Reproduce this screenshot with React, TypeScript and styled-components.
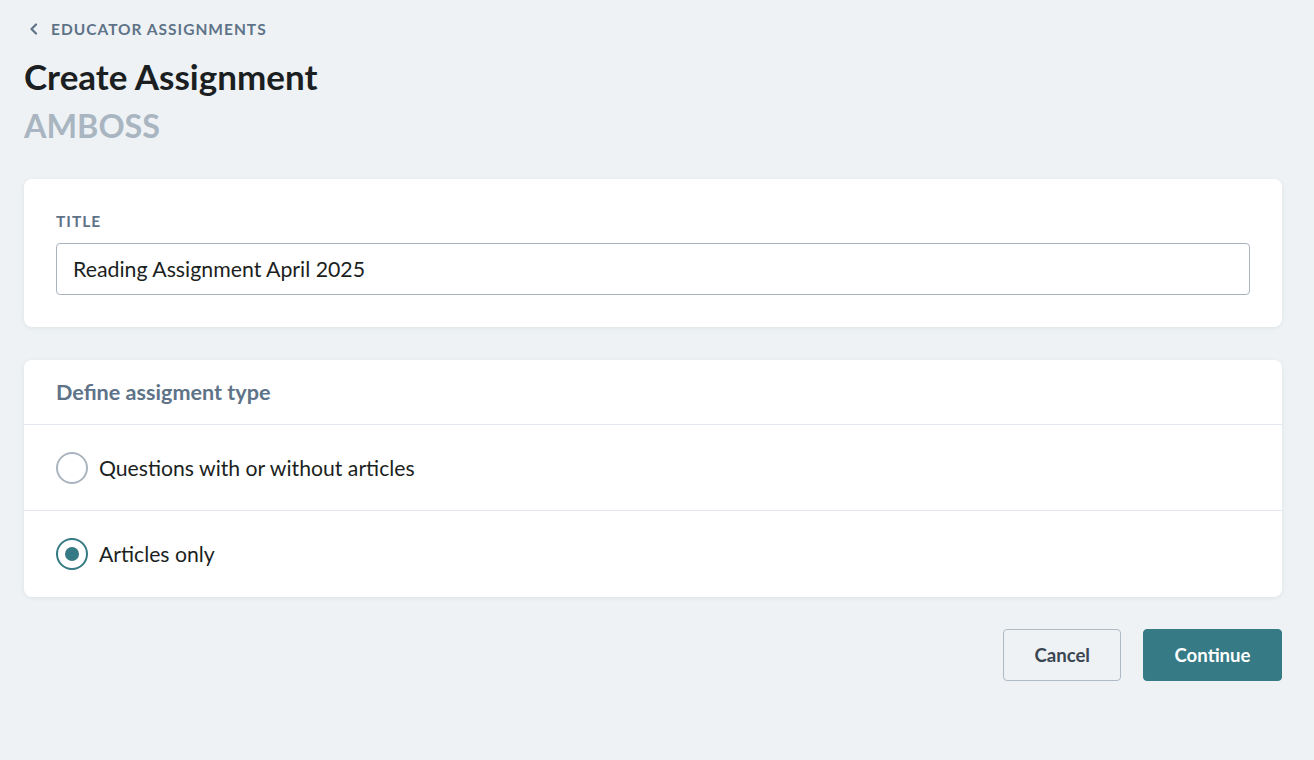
import React, { useState } from "react";
import styled, { createGlobalStyle } from "styled-components";

const GlobalStyle = createGlobalStyle`
  html, body { margin: 0; padding: 0; background: #eef2f5; }
  body { font-family: Lato, "Open Sans", sans-serif; color: #1b1f22; }
  * { box-sizing: border-box; }
`;

const Page = styled.div`
  padding: 19px 32px 40px 24px;
  display: flex;
  flex-direction: column;
`;

const BackLink = styled.a`
  display: flex;
  align-items: center;
  gap: 12px;
  padding-left: 5px;
  height: 20px;
  font-size: 15.5px;
  line-height: 20px;
  font-weight: 700;
  letter-spacing: 1px;
  text-transform: uppercase;
  color: #5e7388;
  text-decoration: none;
  cursor: pointer;
`;

const Title = styled.h1`
  margin: 16px 0 0 0;
  font-size: 35px;
  line-height: 42px;
  font-weight: 700;
  color: #1b1f22;
`;

const Subtitle = styled.div`
  margin-top: 9px;
  font-size: 32.4px;
  line-height: 40px;
  font-weight: 700;
  color: #a9b6c1;
`;

const Card = styled.section<{ $top: number }>`
  margin-top: ${(p) => p.$top}px;
  background: #ffffff;
  border-radius: 8px;
  box-shadow: 0 1px 4px rgba(30, 50, 70, 0.08);
  overflow: hidden;
`;

const CardBody = styled.div`
  padding: 32px;
  display: flex;
  flex-direction: column;
  gap: 12px;
`;

const Label = styled.label`
  font-size: 15.5px;
  line-height: 20px;
  font-weight: 700;
  letter-spacing: 1px;
  text-transform: uppercase;
  color: #5e7388;
`;

const Input = styled.input`
  height: 52px;
  width: 100%;
  border: 1px solid #aab4bf;
  border-radius: 4px;
  padding: 0 16px;
  font-family: Lato, "Open Sans", sans-serif;
  font-size: 21.3px;
  color: #1b1f22;
  outline: none;
`;

const CardHeader = styled.div`
  height: 65px;
  padding: 0 32px;
  display: flex;
  align-items: center;
  font-size: 21.6px;
  font-weight: 700;
  color: #5e7388;
  border-bottom: 1px solid #e1e7ec;
`;

const OptionRow = styled.label<{ $last?: boolean }>`
  height: 86px;
  padding: 0 32px;
  display: flex;
  align-items: center;
  gap: 11px;
  font-size: 21.2px;
  color: #1b1f22;
  cursor: pointer;
  border-bottom: ${(p) => (p.$last ? "none" : "1px solid #e1e7ec")};
`;

const RadioCircle = styled.span<{ $checked: boolean }>`
  width: 32px;
  height: 32px;
  border-radius: 50%;
  border: 2px solid ${(p) => (p.$checked ? "#357a85" : "#aab5c0")};
  display: flex;
  align-items: center;
  justify-content: center;
  flex-shrink: 0;
  &::after {
    content: "";
    width: 14px;
    height: 14px;
    border-radius: 50%;
    background: #357a85;
    display: ${(p) => (p.$checked ? "block" : "none")};
  }
`;

const Actions = styled.div`
  margin-top: 32px;
  display: flex;
  justify-content: flex-end;
  gap: 22px;
`;

const Button = styled.button<{ $primary?: boolean }>`
  height: 52px;
  padding: 0 ${(p) => (p.$primary ? 30.5 : 30)}px;
  border-radius: 4px;
  font-family: Lato, "Open Sans", sans-serif;
  font-size: 18.6px;
  font-weight: 700;
  cursor: pointer;
  border: 1px solid ${(p) => (p.$primary ? "#357a85" : "#b0bac4")};
  background: ${(p) => (p.$primary ? "#357a85" : "transparent")};
  color: ${(p) => (p.$primary ? "#ffffff" : "#3a4651")};
`;

const options = ["Questions with or without articles", "Articles only"];

export default function App() {
  const [selected, setSelected] = useState(1);
  return (
    <>
      <GlobalStyle />
      <Page>
        <BackLink>
          <svg width="10" height="12" viewBox="0 0 10 12" fill="none">
            <path d="M7 1.5L2.5 6L7 10.5" stroke="#5e7388" strokeWidth="2.2" strokeLinecap="round" strokeLinejoin="round" />
          </svg>
          Educator assignments
        </BackLink>
        <Title>Create Assignment</Title>
        <Subtitle>AMBOSS</Subtitle>

        <Card $top={33}>
          <CardBody>
            <Label htmlFor="title">Title</Label>
            <Input id="title" defaultValue="Reading Assignment April 2025" />
          </CardBody>
        </Card>

        <Card $top={33}>
          <CardHeader>Define assigment type</CardHeader>
          {options.map((o, i) => (
            <OptionRow key={o} $last={i === options.length - 1} onClick={() => setSelected(i)}>
              <RadioCircle $checked={selected === i} />
              {o}
            </OptionRow>
          ))}
        </Card>

        <Actions>
          <Button>Cancel</Button>
          <Button $primary>Continue</Button>
        </Actions>
      </Page>
    </>
  );
}
